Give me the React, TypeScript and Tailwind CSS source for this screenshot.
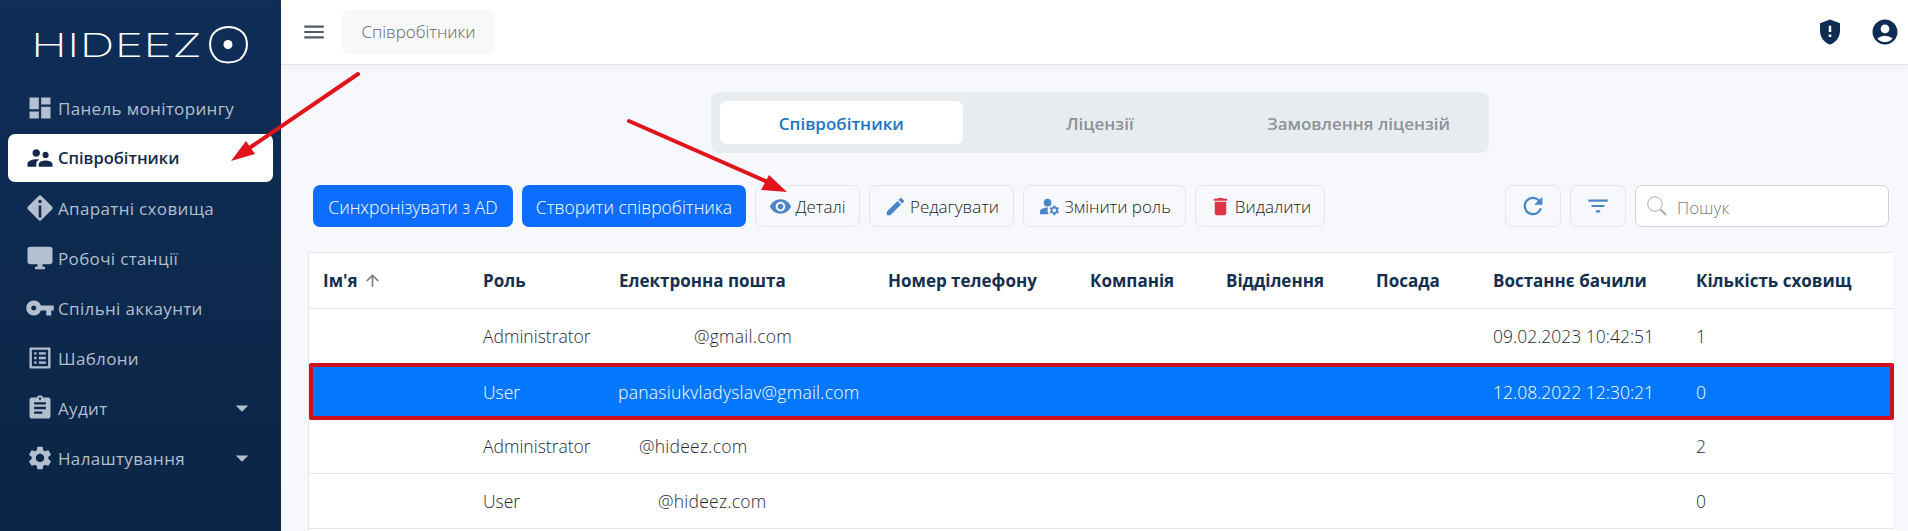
import { ReactNode } from "react"
import {
  MdAccountCircle,
  MdArrowDropDown,
  MdArrowUpward,
  MdAssignment,
  MdDashboard,
  MdDelete,
  MdDesktopWindows,
  MdEdit,
  MdFilterList,
  MdGppMaybe,
  MdListAlt,
  MdManageAccounts,
  MdMenu,
  MdRefresh,
  MdSettings,
  MdSupervisorAccount,
  MdVisibility,
  MdVpnKey,
} from "react-icons/md"

function InfoDiamond() {
  return (
    <svg width="30" height="30" viewBox="0 0 30 30" className="shrink-0">
      <rect x="5.5" y="5.5" width="19" height="19" rx="2" transform="rotate(45 15 15)" fill="currentColor" />
      <rect x="13.7" y="12.5" width="2.6" height="12" fill="#0f2c54" />
      <circle cx="15" cy="8.5" r="1.7" fill="#0f2c54" />
    </svg>
  )
}

function Logo() {
  return (
    <div className="h-[64px] pl-[31px] pt-[26px] flex items-center">
      <span className="w-[177px] shrink-0 font-['Inter',sans-serif] font-extralight text-[33px] leading-none text-white origin-left scale-x-[1.48] whitespace-nowrap">
        HIDEEZ
      </span>
      <svg width="41" height="40" viewBox="0 0 40 40" className="shrink-0">
        <path
          d="M20 2 C28 2 35 6 37.5 13 C39.5 20 38 28 32 34 C25 38.5 14 38.5 8 34 C2 28 .5 20 2.5 13 C5 6 12 2 20 2 Z"
          fill="none"
          stroke="white"
          strokeWidth="2"
        />
        <circle cx="19.5" cy="19.5" r="4.5" fill="white" />
      </svg>
    </div>
  )
}

function NavItem({ icon, label, active, caret }: { icon: ReactNode; label: string; active?: boolean; caret?: boolean }) {
  return (
    <div
      className={
        active
          ? "h-[48px] mx-[8px] my-[1px] pl-[17px] pr-[22px] flex items-center gap-[3px] bg-white rounded-[7px] text-[#12294b] font-semibold"
          : "h-[50px] mx-[8px] pl-[17px] pr-[22px] flex items-center gap-[3px] text-[#b3bfce] font-medium"
      }
    >
      <span className="w-[30px] flex justify-center shrink-0">{icon}</span>
      <span className={active ? "flex-1 pt-[1px] text-[16.5px] whitespace-nowrap" : "flex-1 pt-[1px] text-[17px] tracking-[0.02em] whitespace-nowrap"}>{label}</span>
      {caret && <MdArrowDropDown size={30} className="shrink-0 -mr-[6px]" />}
    </div>
  )
}

function Sidebar() {
  return (
    <aside className="w-[281px] shrink-0 h-full bg-gradient-to-b from-[#0f2e58] to-[#0b2545] font-['Open_Sans',sans-serif]">
      <Logo />
      <nav className="pt-[19px]">
        <NavItem icon={<MdDashboard size={28} />} label="Панель моніторингу" />
        <NavItem active icon={<MdSupervisorAccount size={30} />} label="Співробітники" />
        <NavItem icon={<InfoDiamond />} label="Апаратні сховища" />
        <NavItem icon={<MdDesktopWindows size={30} />} label="Робочі станції" />
        <NavItem icon={<MdVpnKey size={30} />} label="Спільні аккаунти" />
        <NavItem icon={<MdListAlt size={28} />} label="Шаблони" />
        <NavItem caret icon={<MdAssignment size={28} />} label="Аудит" />
        <NavItem caret icon={<MdSettings size={28} />} label="Налаштування" />
      </nav>
    </aside>
  )
}

function Header() {
  return (
    <header className="h-[65px] shrink-0 bg-white border-b border-[#e2e4e8] shadow-[0_4px_10px_rgba(0,0,0,0.03)] flex items-center pl-[20px] pr-[8px]">
      <MdMenu size={26} className="text-[#555b63]" />
      <div className="ml-[15px] w-[153px] h-[44px] flex items-center justify-center rounded-[7px] bg-[#f7f8fa] text-[17px] font-light text-[#5f666e]">
        Співробітники
      </div>
      <div className="ml-auto flex items-center gap-[25px] text-[#0f2c54]">
        <MdGppMaybe size={30} />
        <MdAccountCircle size={30} />
      </div>
    </header>
  )
}

function Tabs() {
  return (
    <div className="flex justify-center pt-[27px] pl-[11px]">
      <div className="w-[778px] h-[61px] p-[9px] bg-[#e9ecef] rounded-[8px] grid grid-cols-3 gap-[16px] text-[17px] font-semibold text-[#8b9298]">
        <div className="bg-white rounded-[7px] flex items-center justify-center pt-[2px] text-[#1c74c4]">Співробітники</div>
        <div className="flex items-center justify-center pt-[2px]">Ліцензії</div>
        <div className="flex items-center justify-center pt-[2px]">Замовлення ліцензій</div>
      </div>
    </div>
  )
}

function ActionButton({ icon, label, width }: { icon: ReactNode; label: string; width: string }) {
  return (
    <button className={`${width} h-[42px] flex items-center justify-center gap-[3px] rounded-[7px] border border-[#e3e6ea] bg-[#f7f8fb] text-[17px] font-light text-[#1a1d21]`}>
      {icon}
      <span className="pt-[2px]">{label}</span>
    </button>
  )
}

function Toolbar() {
  return (
    <div className="mt-[32px] ml-[32px] mr-[19px] flex items-center gap-[9px]">
      <button className="w-[200px] h-[42px] pt-[2px] rounded-[7px] bg-[#0d6efd] text-white text-[17.5px] font-light">Синхронізувати з AD</button>
      <button className="w-[224px] h-[42px] pt-[2px] rounded-[7px] bg-[#0d6efd] text-white text-[17.5px] font-light">Створити співробітника</button>
      <ActionButton width="w-[105px]" icon={<MdVisibility size={23} className="text-[#4a86c8]" />} label="Деталі" />
      <ActionButton width="w-[145px]" icon={<MdEdit size={23} className="text-[#4a86c8]" />} label="Редагувати" />
      <ActionButton width="w-[163px]" icon={<MdManageAccounts size={23} className="text-[#4a86c8]" />} label="Змінити роль" />
      <ActionButton width="w-[130px]" icon={<MdDelete size={23} className="text-[#dc3545]" />} label="Видалити" />
      <button className="ml-auto w-[56px] h-[42px] flex items-center justify-center rounded-[7px] border border-[#e3e6ea] bg-[#f7f8fb] text-[#4a86c8]">
        <MdRefresh size={28} />
      </button>
      <button className="w-[56px] h-[42px] flex items-center justify-center rounded-[7px] border border-[#e3e6ea] bg-[#f7f8fb] text-[#4a86c8]">
        <MdFilterList size={26} />
      </button>
      <div className="w-[254px] h-[42px] flex items-center gap-[9px] pl-[10px] rounded-[7px] border border-[#ced1d6] bg-white">
        <svg width="22" height="22" viewBox="0 0 22 22" fill="none" className="text-[#a9adb2] shrink-0">
          <circle cx="9" cy="9" r="7.3" stroke="currentColor" strokeWidth="1" />
          <path d="M14.5 14.5 L20 20" stroke="currentColor" strokeWidth="2" />
        </svg>
        <span className="pt-[3px] text-[17px] font-light text-[#777c82]">Пошук</span>
      </div>
    </div>
  )
}

const colWidths = ["w-[160px]", "w-[136px]", "w-[269px]", "w-[202px]", "w-[136px]", "w-[150px]", "w-[117px]", "w-[203px]", "w-[212px]"]
const heads = ["Ім'я", "Роль", "Електронна пошта", "Номер телефону", "Компанія", "Відділення", "Посада", "Востаннє бачили", "Кількість сховищ"]

type Row = { role: string; email: string; indent: string; seen: string; count: string; selected?: boolean }

const rows: Row[] = [
  { role: "Administrator", email: "@gmail.com", indent: "pl-[76px]", seen: "09.02.2023 10:42:51", count: "1" },
  { role: "User", email: "panasiukvladyslav@gmail.com", indent: "pl-0", seen: "12.08.2022 12:30:21", count: "0", selected: true },
  { role: "Administrator", email: "@hideez.com", indent: "pl-[21px]", seen: "", count: "2" },
  { role: "User", email: "@hideez.com", indent: "pl-[40px]", seen: "", count: "0" },
  { role: "", email: "", indent: "pl-0", seen: "", count: "" },
]

function EmployeesTable() {
  return (
    <div className="relative mt-[25px] ml-[27px] mr-[15px] bg-white border-t border-l border-[#e3e6ea]">
      <table className="w-full table-fixed border-collapse text-[17.5px]">
        <thead>
          <tr className="h-[55px] border-b border-[#e3e6ea]">
            {heads.map((h, i) => (
              <th key={h} className={`${colWidths[i]} pl-[14px] pt-[1px] text-left text-[17px] font-bold text-[#14304f] whitespace-nowrap`}>
                <span className="inline-flex items-center gap-[5px]">
                  {h}
                  {i === 0 && <MdArrowUpward size={19} className="text-[#777c82]" />}
                </span>
              </th>
            ))}
          </tr>
        </thead>
        <tbody className="font-light text-[#1f2a36]">
          {rows.map((r, i) => (
            <tr key={i} className={r.selected ? "h-[55px] bg-[#0377fd] text-white" : "h-[55px] border-b border-[#e3e6ea]"}>
              <td></td>
              <td className="pl-[14px] pt-[2px] whitespace-nowrap">{r.role}</td>
              <td className="pl-[13px] pt-[2px] whitespace-nowrap">
                <span className={`${r.indent} tracking-[0.25px]`}>{r.email}</span>
              </td>
              <td></td>
              <td></td>
              <td></td>
              <td></td>
              <td className="pl-[14px] pt-[2px] whitespace-nowrap">{r.seen}</td>
              <td className="pl-[14px] pt-[2px]">{r.count}</td>
            </tr>
          ))}
        </tbody>
      </table>
      <div className="absolute top-[110px] left-0 -right-[1px] h-[57px] border-4 border-[#cf101d] rounded-[2px] pointer-events-none" />
    </div>
  )
}

function Arrows() {
  return (
    <svg className="absolute inset-0 w-full h-full pointer-events-none" viewBox="0 0 1908 531">
      <path d="M358 74 L245 151" stroke="#e0141a" strokeWidth="4" strokeLinecap="round" />
      <path d="M231 161 L246 141 L255 154 Z" fill="#e0141a" />
      <path d="M629 121 L770 183" stroke="#e0141a" strokeWidth="4" strokeLinecap="round" />
      <path d="M787 192 L761 190 L769 175 Z" fill="#e0141a" />
    </svg>
  )
}

export default function App() {
  return (
    <div className="relative h-[531px] w-[1908px] overflow-hidden flex bg-[#f6f8fb] font-['Open_Sans',sans-serif]">
      <Sidebar />
      <main className="flex-1 flex flex-col min-w-0">
        <Header />
        <Tabs />
        <Toolbar />
        <EmployeesTable />
      </main>
      <Arrows />
    </div>
  )
}
